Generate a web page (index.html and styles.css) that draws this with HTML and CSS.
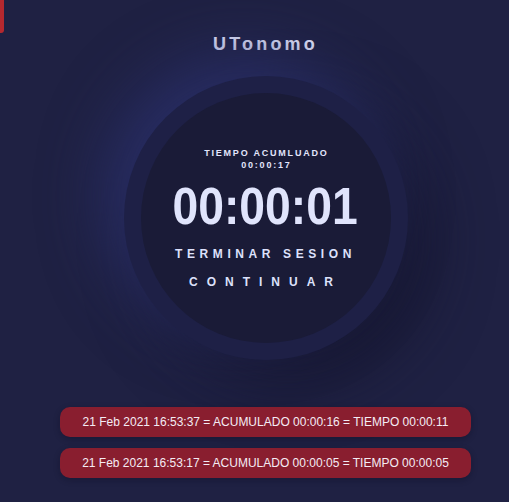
FILE: index.html
```html
<!DOCTYPE html>
<html lang="es">
<head>
<meta charset="utf-8">
<title>UTonomo</title>
<link rel="stylesheet" href="styles.css">
</head>
<body>
<div class="tab"></div>
<main class="app">
  <h1 class="title">UTonomo</h1>
  <section class="dial">
    <div class="dial-inner">
      <p class="acc-label">TIEMPO ACUMLUADO</p>
      <p class="acc-value">00:00:17</p>
      <p class="clock">00:00:01</p>
      <button class="btn btn-end">TERMINAR SESION</button>
      <button class="btn btn-cont">CONTINUAR</button>
    </div>
  </section>
  <ul class="log">
    <li class="log-item">21 Feb 2021 16:53:37 = ACUMULADO 00:00:16 = TIEMPO 00:00:11</li>
    <li class="log-item">21 Feb 2021 16:53:17 = ACUMULADO 00:00:05 = TIEMPO 00:00:05</li>
  </ul>
</main>
</body>
</html>
```
FILE: styles.css
```css
* { box-sizing: border-box; }
html, body {
  margin: 0;
  height: 100%;
}
body {
  background: #1f2143;
  font-family: "Liberation Sans", Arial, sans-serif;
  color: #dde1fb;
  overflow: hidden;
  position: relative;
}
.tab {
  position: absolute;
  left: 0;
  top: 0;
  width: 4px;
  height: 33px;
  background: #b5282f;
  border-bottom-right-radius: 3px;
}
.app {
  padding-left: 22px;
  padding-top: 34px;
  display: flex;
  flex-direction: column;
  align-items: center;
}
.title {
  margin: 0;
  font-size: 18px;
  line-height: 21px;
  font-weight: bold;
  letter-spacing: 3.2px;
  color: #e6e8ff;
}
.dial {
  margin-top: 21px;
  width: 284px;
  height: 284px;
  border-radius: 50%;
  background: #1e2046;
  box-shadow: -22px -22px 60px rgba(44, 50, 112, 0.7), 22px 22px 60px rgba(18, 19, 40, 0.7);
  display: flex;
  align-items: center;
  justify-content: center;
}
.dial-inner {
  width: 250px;
  height: 250px;
  border-radius: 50%;
  background: #1a1b37;
  display: flex;
  flex-direction: column;
  align-items: center;
  padding-top: 54px;
}
.acc-label, .acc-value {
  margin: 0;
  font-size: 9px;
  line-height: 12px;
  font-weight: bold;
  letter-spacing: 1.8px;
  padding-left: 1.8px;
  color: #e2e5fc;
}
.clock {
  margin: 9px 0 0;
  font-size: 52px;
  line-height: 52px;
  font-weight: bold;
  letter-spacing: 0;
  transform: scaleX(0.89);
  color: #e0e4fc;
}
.btn {
  background: none;
  border: 0;
  padding: 0;
  color: #dde1fb;
  font-family: inherit;
  font-weight: bold;
  font-size: 12px;
  line-height: 14px;
  cursor: pointer;
}
.btn-end {
  margin-top: 15px;
  letter-spacing: 4.6px;
}
.btn-cont {
  margin-top: 14px;
  letter-spacing: 9px;
}
.log {
  list-style: none;
  margin: 47px 0 0;
  padding: 0;
  width: 411px;
  display: flex;
  flex-direction: column;
  gap: 11px;
}
.log-item {
  height: 30px;
  border-radius: 10px;
  background: #891e2f;
  color: #f4ecf4;
  font-size: 12px;
  display: flex;
  align-items: center;
  justify-content: center;
  box-shadow: 0 2px 6px rgba(10, 10, 25, 0.3);
}
```
